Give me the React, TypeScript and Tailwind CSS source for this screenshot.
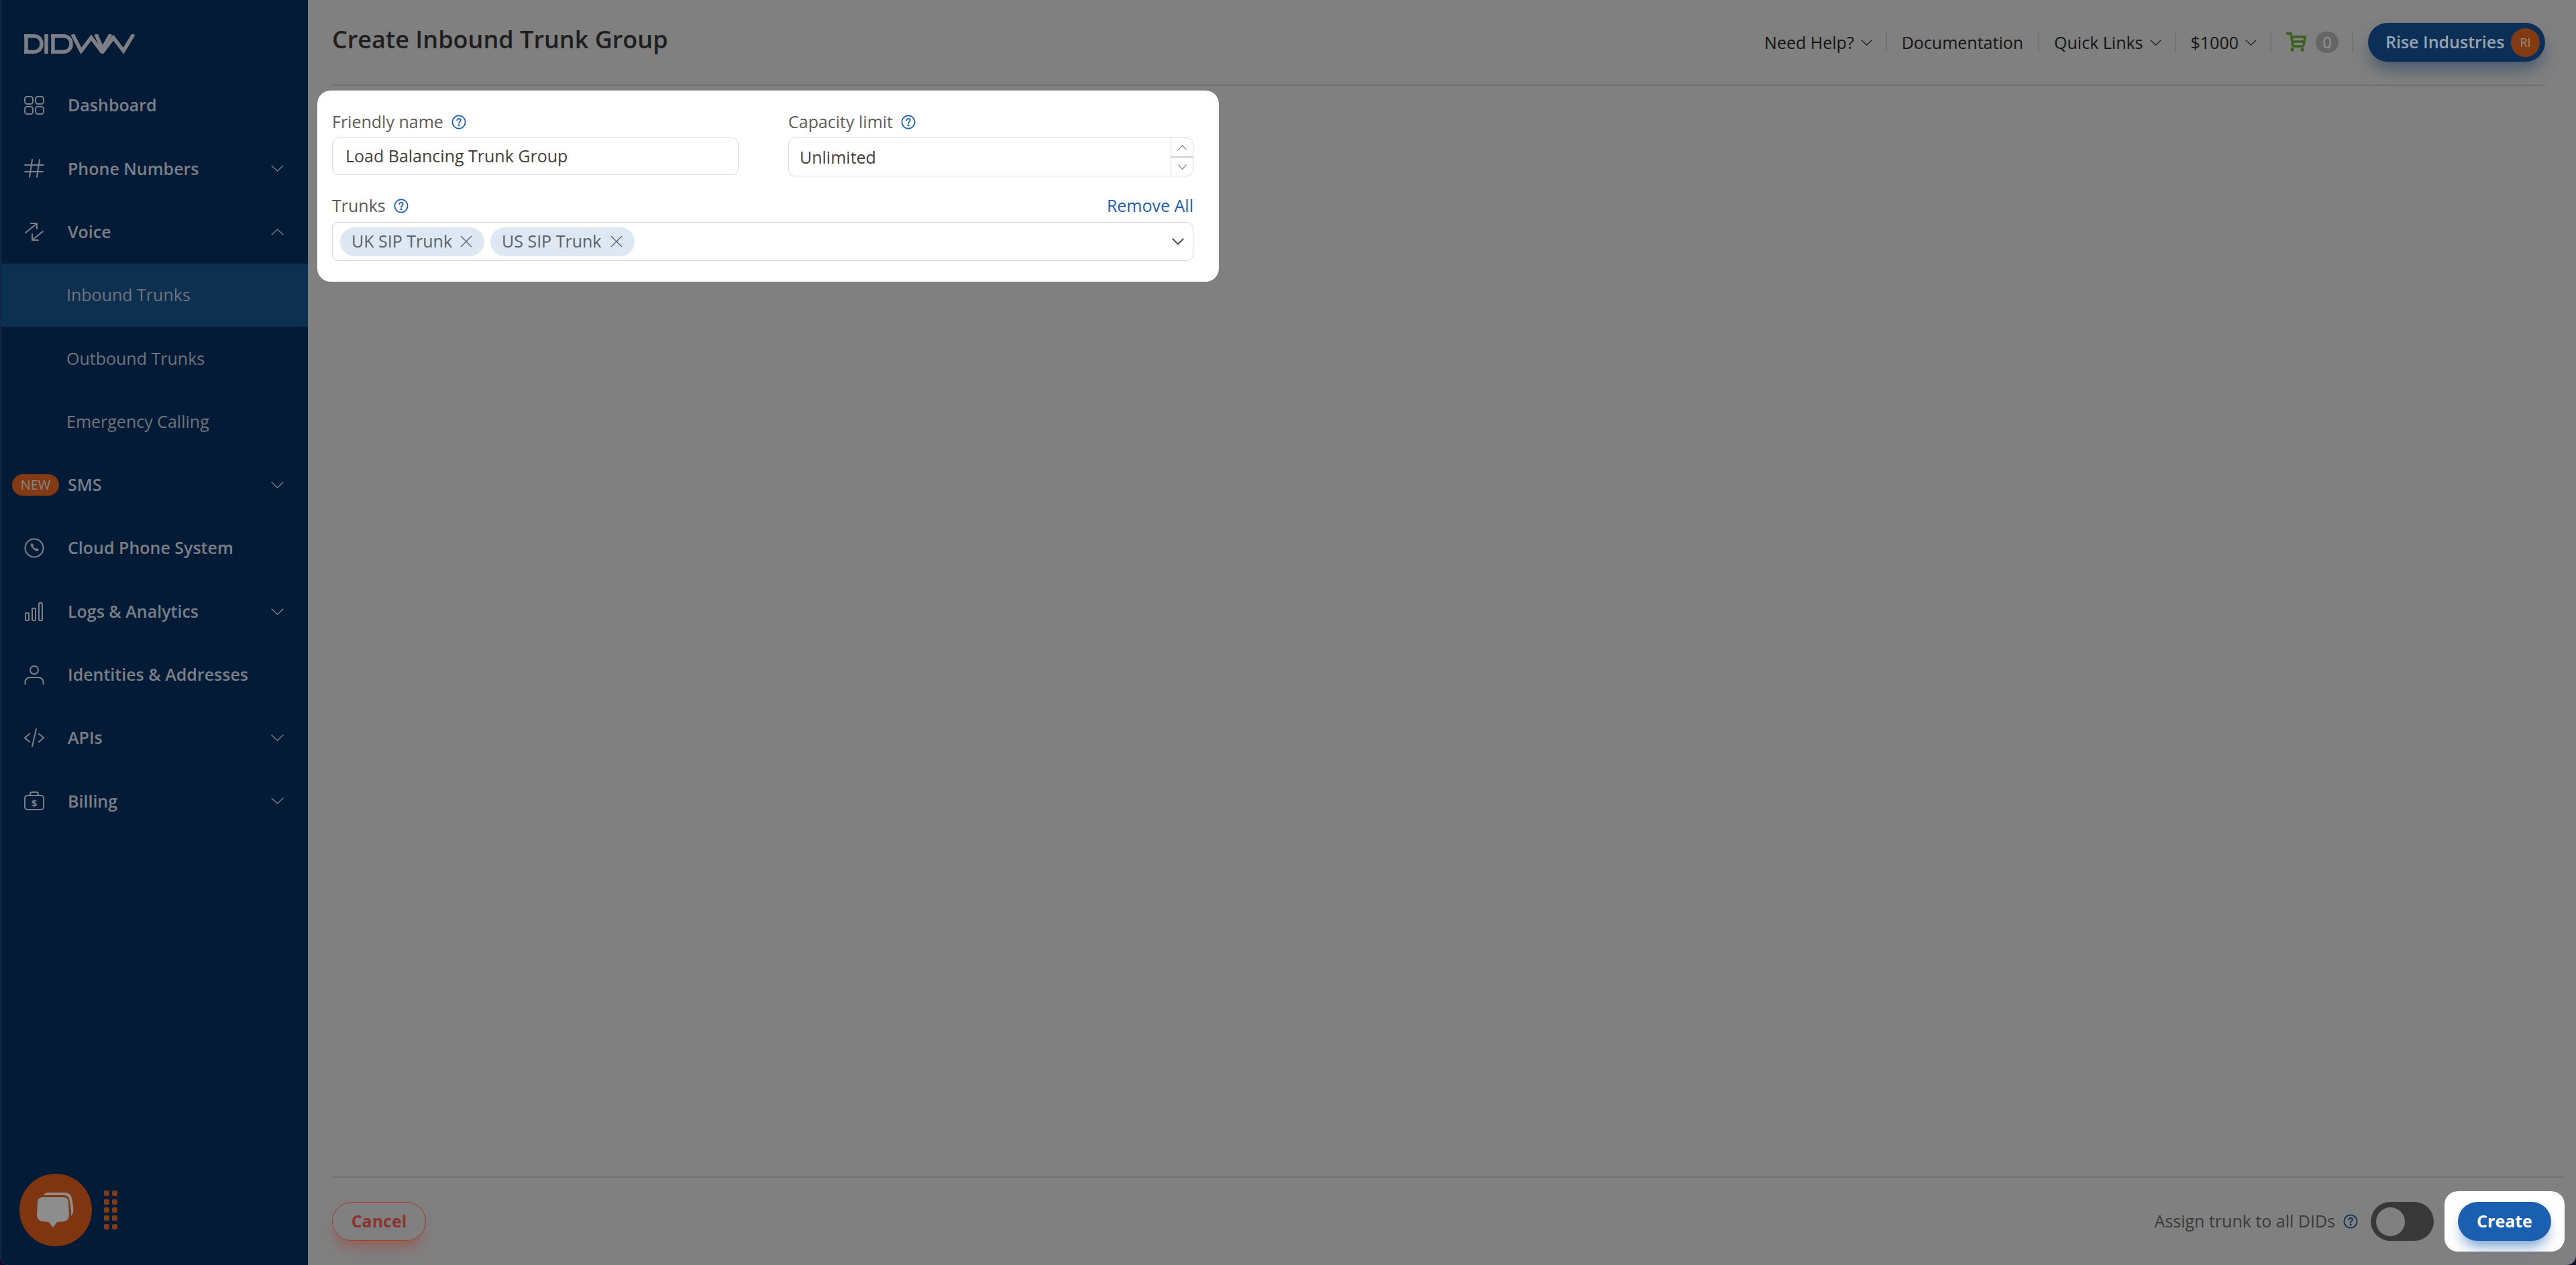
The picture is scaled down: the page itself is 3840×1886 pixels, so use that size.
import React from "react";

const font = "font-['Open_Sans','Noto_Sans',sans-serif]";

function Chev({ className = "", up, width = 1.4 }: { className?: string; up?: boolean; width?: number }) {
  return (
    <svg viewBox="0 0 19 10" preserveAspectRatio="none" className={`shrink-0 ${up ? "rotate-180" : ""} ${className}`} fill="none" stroke="currentColor" strokeWidth={width}>
      <path d="M0.7 0.7 9.5 9 18.3 0.7" />
    </svg>
  );
}

function Help({ className = "" }: { className?: string }) {
  return (
    <svg viewBox="0 0 22 22" className={`h-[22px] w-[22px] shrink-0 ${className}`} fill="none" stroke="currentColor" strokeWidth="1.8">
      <circle cx="11" cy="11" r="9.6" />
      <path d="M8.3 8.6c0-1.6 1.2-2.6 2.8-2.6s2.7 1 2.7 2.3c0 2.2-2.8 2.2-2.8 4.4" strokeLinecap="round" />
      <circle cx="11" cy="15.8" r="0.6" fill="currentColor" />
    </svg>
  );
}

const iconClass = "h-[32px] w-[30px]";

function DashIcon() {
  return (
    <svg viewBox="0 0 30 32" className={iconClass} fill="none" stroke="currentColor" strokeWidth="2">
      <rect x="1" y="3" width="12" height="11" rx="3.5" />
      <rect x="17" y="3" width="12" height="11" rx="3.5" />
      <rect x="1" y="18" width="12" height="11" rx="3.5" />
      <rect x="17" y="18" width="12" height="11" rx="3.5" />
    </svg>
  );
}

function HashIcon() {
  return (
    <svg viewBox="0 0 30 32" className={iconClass} fill="none" stroke="currentColor" strokeWidth="2" strokeLinecap="round">
      <path d="M1 11h28M1 21h27M12 3 8 29M23 3l-4 26" />
    </svg>
  );
}

function VoiceIcon() {
  return (
    <svg viewBox="0 0 30 32" className={iconClass} fill="none" stroke="currentColor" strokeWidth="2" strokeLinecap="round" strokeLinejoin="round">
      <path d="M2 17 18 4M10 3h9v8M28 15 12 28M12 19v9h9" />
    </svg>
  );
}

function PhoneIcon() {
  return (
    <svg viewBox="0 0 30 32" className={iconClass} fill="none" stroke="currentColor" strokeWidth="2">
      <circle cx="15" cy="16" r="13.5" />
      <path d="M10.5 10c-1 1 0 4 2.5 6.5s5.5 4.5 7.500 3.500l1-1.500-3-2-1.500 1c-1 0-4-3-4-4l1-1.500-2-2.500z" fill="currentColor" strokeWidth="1" />
    </svg>
  );
}

function LogsIcon() {
  return (
    <svg viewBox="0 0 30 32" className={iconClass} fill="none" stroke="currentColor" strokeWidth="2">
      <rect x="2" y="18" width="5" height="11" rx="1" />
      <rect x="12" y="11" width="5" height="18" rx="1" />
      <rect x="22" y="3" width="5" height="26" rx="1" />
    </svg>
  );
}

function UserIcon() {
  return (
    <svg viewBox="0 0 30 32" className={iconClass} fill="none" stroke="currentColor" strokeWidth="2" strokeLinecap="round">
      <circle cx="15" cy="9" r="6" />
      <path d="M1.5 30v-3c0-4 3-7 7-7h13c4 0 7 3 7 7v3" />
    </svg>
  );
}

function CodeIcon() {
  return (
    <svg viewBox="0 0 30 32" className={iconClass} fill="none" stroke="currentColor" strokeWidth="2" strokeLinecap="round" strokeLinejoin="round">
      <path d="m8 10-7 6 7 6M22 10l7 6-7 6M18 3l-6 26" />
    </svg>
  );
}

function BillingIcon() {
  return (
    <svg viewBox="0 0 30 32" className={iconClass} fill="none" stroke="currentColor" strokeWidth="2">
      <rect x="1" y="8" width="28" height="21" rx="4" />
      <path d="M9 8V6c0-2 1-3 3-3h6c2 0 3 1 3 3v2" />
      <text x="15" y="25" textAnchor="middle" fontSize="15" fontWeight="700" fill="currentColor" stroke="none">$</text>
    </svg>
  );
}

function Logo() {
  return (
    <svg viewBox="0 0 166 29" className="h-[29px] w-[166px]" fill="none" stroke="#7c7f85" strokeWidth="5.5">
      <path d="M0 2.800h14c8 0 12 5 12 11.700s-4 11.700-12 11.700H0M3 2.800v23.400" />
      <path d="M33 0v29" />
      <path d="M40 2.800h18c8 0 12 5 12 11.700s-4 11.700-12 11.700H40M43 2.800v23.400" />
      <path d="m72 0 13 25 15-20 15 20 14-25" />
      <path d="m107 0 11 25 15-20 15 20 15-25" />
    </svg>
  );
}

function Row({ icon, label, chevron, badge }: { icon?: React.ReactNode; label: string; chevron?: "up" | "down"; badge?: boolean }) {
  return (
    <div className="relative flex h-[94.3px] items-center pl-[34px] pr-[36px] text-[#7b7f86]">
      {badge ? (
        <span className="absolute left-[16px] flex h-[32px] w-[70px] items-center justify-center rounded-full bg-[#823a13] text-[20px] text-[#8a8682]">
          NEW
        </span>
      ) : (
        <span className="flex w-[65px] shrink-0">{icon}</span>
      )}
      <span className={`text-[25px] font-semibold ${badge ? "ml-[65px]" : ""}`}>{label}</span>
      {chevron && <Chev up={chevron === "up"} className="ml-auto h-[10px] w-[19px]" />}
    </div>
  );
}

function SubRow({ label, active }: { label: string; active?: boolean }) {
  return (
    <div className={`flex h-[94.3px] items-center pl-[97px] text-[25px] text-[#6f747b] ${active ? "bg-[#0d2f50]" : ""}`}>
      {label}
    </div>
  );
}

function Sidebar() {
  return (
    <aside className="flex h-full w-[459px] shrink-0 flex-col border-l-2 border-[#13294a] bg-[#041b38]">
      <div className="h-[110px] pl-[34px] pt-[51px]">
        <Logo />
      </div>
      <Row icon={<DashIcon />} label="Dashboard" />
      <Row icon={<HashIcon />} label="Phone Numbers" chevron="down" />
      <Row icon={<VoiceIcon />} label="Voice" chevron="up" />
      <SubRow label="Inbound Trunks" active />
      <SubRow label="Outbound Trunks" />
      <SubRow label="Emergency Calling" />
      <Row badge label="SMS" chevron="down" />
      <Row icon={<PhoneIcon />} label="Cloud Phone System" />
      <Row icon={<LogsIcon />} label="Logs & Analytics" chevron="down" />
      <Row icon={<UserIcon />} label="Identities & Addresses" />
      <Row icon={<CodeIcon />} label="APIs" chevron="down" />
      <Row icon={<BillingIcon />} label="Billing" chevron="down" />
      <div className="mt-auto flex items-center pb-[28px] pl-[27px]">
        <div className="flex h-[108px] w-[108px] items-center justify-center rounded-full bg-[#7f3510]">
          <svg viewBox="0 0 108 108" className="h-[108px] w-[108px]" fill="#8d8d8d">
            <path d="M36 32c2-3 4-4 8-4h22c8 0 11 3 12 9 2 8 3 16 2 21l-3 5c0-10-1-18-3-26-2-4-4-5-9-5z" />
            <path d="M36 35h28c6 0 9 2 9 8l1 18c0 6-3 9-8 10l-10 1-6 8-6-8-10-1c-5-1-8-4-8-10l1-18c0-6 3-8 9-8z" />
          </svg>
        </div>
        <div className="ml-[18px] grid grid-cols-2 gap-x-[4px] gap-y-[4.4px]">
          {Array.from({ length: 10 }).map((_, i) => (
            <span key={i} className="h-[8px] w-[8px] rounded-[2px] bg-[#823a13]" />
          ))}
        </div>
      </div>
    </aside>
  );
}

function Sep() {
  return <span className="block h-[32px] w-[2px] bg-[#747474]" />;
}

function Header() {
  return (
    <header className="flex h-[128px] shrink-0 items-start justify-between border-b-2 border-[#6f6f6f]">
      <h1 className="mt-[34px] text-[36px] font-semibold leading-[50px] text-[#1e1e1e]">Create Inbound Trunk Group</h1>
      <div className="mt-[34px] flex h-[58px] items-center text-[25px] text-[#141414]">
        <span className="mt-[1px]">Need Help?</span>
        <Chev className="ml-[10px] mr-[20px] h-[9px] w-[17px]" />
        <Sep />
        <span className="mx-[22px] mt-[1px]">Documentation</span>
        <Sep />
        <span className="ml-[22px] mt-[1px]">Quick Links</span>
        <Chev className="ml-[10px] mr-[20px] h-[9px] w-[17px]" />
        <Sep />
        <span className="ml-[22px] mt-[1px]">$1000</span>
        <Chev className="ml-[10px] mr-[20px] h-[9px] w-[17px]" />
        <Sep />
        <svg viewBox="0 0 30 30" className="ml-[22px] h-[30px] w-[30px]" fill="none" stroke="#3a5e1c" strokeWidth="3.4">
          <path d="M0 2h7l3 19h16" />
          <path d="M8 7h20l-2 13" />
          <path d="M9 14h18" />
          <circle cx="9" cy="26" r="2.6" fill="#3a5e1c" stroke="none" />
          <circle cx="24" cy="26" r="2.6" fill="#3a5e1c" stroke="none" />
        </svg>
        <span className="ml-[14px] flex h-[32px] w-[34px] items-center justify-center rounded-full bg-[#666666] text-[24px] text-[#949494]">0</span>
        <span className="ml-[20px]"><Sep /></span>
        <div className="ml-[22px] flex h-[58px] w-[264px] items-center rounded-full bg-[#0c2f58] pl-[26px] pr-[8px] shadow-[0_14px_24px_-4px_rgba(12,47,88,0.5)]">
          <span className="font-semibold text-[#9aa3af]">Rise Industries</span>
          <span className="ml-auto flex h-[43px] w-[43px] items-center justify-center rounded-full bg-[#823a13] text-[18px] text-[#a08a7c]">RI</span>
        </div>
      </div>
    </header>
  );
}

function Chip({ label }: { label: string }) {
  return (
    <span className="flex h-[43px] w-[215px] items-center rounded-full bg-[#dde8f4] pl-[17px] pr-[18px] text-[25px] text-[#5c6167]">
      {label}
      <svg viewBox="0 0 18 18" className="ml-auto h-[18px] w-[18px]" fill="none" stroke="currentColor" strokeWidth="1.4">
        <path d="m1 1 16 16M17 1 1 17" />
      </svg>
    </span>
  );
}

function Card() {
  return (
    <section className="ml-[-22px] mt-[7px] h-[285px] w-[1344px] rounded-[20px] bg-white pl-[22px] pr-[38px] pt-[32px] text-[25px]">
      <div className="grid grid-cols-[606px_604px] gap-x-[74px]">
        <div>
          <label className="flex h-[30px] items-center text-[#5c5c5c]">
            Friendly name <Help className="ml-[12px] text-[#1a5fb4]" />
          </label>
          <div className="mt-[8px] flex h-[56px] items-center rounded-[10px] border-[1.5px] border-[#d8d8d8] pl-[19px] text-[#3f3f3f]">
            Load Balancing Trunk Group
          </div>
        </div>
        <div>
          <label className="flex h-[30px] items-center text-[#5c5c5c]">
            Capacity limit <Help className="ml-[12px] text-[#1a5fb4]" />
          </label>
          <div className="mt-[8px] flex h-[58px] items-center rounded-[10px] border-[1.5px] border-[#d8d8d8] pl-[16px] text-[#3f3f3f]">
            <span className="mt-[1px]">Unlimited</span>
            <div className="ml-auto flex h-full w-[33px] flex-col border-l-[1.5px] border-[#d8d8d8] text-[#6a6a6a]">
              <span className="flex flex-1 items-center justify-center border-b-2 border-[#cfcfcf]">
                <Chev up className="h-[8px] w-[13px]" />
              </span>
              <span className="flex flex-1 items-center justify-center">
                <Chev className="h-[8px] w-[13px]" />
              </span>
            </div>
          </div>
        </div>
      </div>
      <div className="mt-[29px] flex h-[30px] items-center text-[#5c5c5c]">
        Trunks <Help className="ml-[12px] text-[#1a5fb4]" />
        <span className="ml-auto text-[#1a5fb4]">Remove All</span>
      </div>
      <div className="mt-[9px] flex h-[58px] items-center gap-[9px] rounded-[10px] border-[1.5px] border-[#d8d8d8] pl-[11px] pr-[13px]">
        <Chip label="UK SIP Trunk" />
        <Chip label="US SIP Trunk" />
        <Chev className="ml-auto h-[10px] w-[18px] text-[#3c3c3c]" width={1.8} />
      </div>
    </section>
  );
}

function Footer() {
  return (
    <footer className="flex h-[132px] shrink-0 items-start border-t-2 border-[#717171] pt-[36px]">
      <button className="h-[58px] w-[140px] rounded-full border-[1.5px] border-[#a33a30] text-[25px] font-bold text-[#8a352c] shadow-[0_14px_20px_-6px_rgba(163,58,48,0.5)]">
        Cancel
      </button>
      <div className="ml-auto mt-[-16px] flex items-center text-[25px] text-[#3a3a3a]">
        <span>Assign trunk to all DIDs</span>
        <Help className="ml-[12px] text-[#0c2f58]" />
        <span className="ml-[19px] flex h-[58px] w-[94px] items-center rounded-full bg-[#383838] pl-[8px]">
          <span className="h-[43px] w-[43px] rounded-full bg-[#808080]" />
        </span>
        <div className="ml-[16px] flex h-[90px] w-[179px] items-center justify-center rounded-[20px] bg-white">
          <button className="h-[58px] w-[139px] rounded-full bg-[#1b5fb0] text-[25px] font-bold text-white shadow-[0_14px_20px_-6px_rgba(27,95,176,0.6)]">
            Create
          </button>
        </div>
      </div>
    </footer>
  );
}

export default function App() {
  return (
    <div className={`h-[1886px] w-[3840px] overflow-hidden bg-[#120c2e] ${font}`}>
      <div className="flex h-full w-full overflow-hidden rounded-b-[14px] bg-[#808080]">
        <Sidebar />
        <main className="flex min-w-0 flex-1 flex-col pl-[36px] pr-[46px]">
          <Header />
          <div className="flex-1">
            <Card />
          </div>
          <div className="mr-[-29px]">
            <Footer />
          </div>
        </main>
      </div>
    </div>
  );
}
